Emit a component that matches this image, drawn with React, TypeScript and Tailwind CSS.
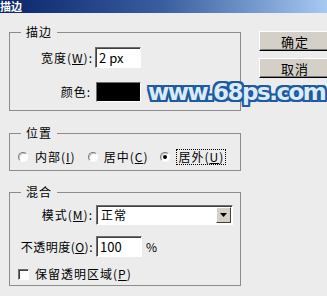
import React from "react";

const font = { fontFamily: '"Noto Sans CJK SC", "Liberation Sans", sans-serif' };

function Group({ title, children, className = "" }: { title: string; children: React.ReactNode; className?: string }) {
  return (
    <fieldset className={`w-[232px] border border-[#8c8c8c] px-0 ${className}`}>
      <legend className="ml-[11px] px-[5px] text-[12px] leading-[14px] tracking-[1px] text-black">{title}</legend>
      {children}
    </fieldset>
  );
}

function Radio({ checked = false }: { checked?: boolean }) {
  return (
    <span className="flex h-[10px] w-[10px] items-center justify-center rounded-full border border-t-[#7a7a7a] border-l-[#7a7a7a] border-b-white border-r-white bg-white shadow-[inset_1px_1px_0_#c8c8c8]">
      {checked && <span className="h-[4px] w-[4px] rounded-full bg-black" />}
    </span>
  );
}

function Field({ w, h = 21, children }: { w: number; h?: number; children?: React.ReactNode }) {
  return (
    <div
      className="flex items-center border border-t-[#6f6f6f] border-l-[#6f6f6f] border-b-white border-r-white bg-white pl-[3px] text-[13px] leading-none shadow-[inset_1px_1px_0_#404040]"
      style={{ width: w, height: h }}
    >
      {children}
    </div>
  );
}

function Button({ label }: { label: string }) {
  return (
    <div className="flex h-[20px] w-[72px] items-center justify-center border border-t-white border-l-white border-b-black border-r-black bg-[#d4d0c8] text-[13px] leading-none tracking-[1px] shadow-[inset_-1px_-1px_0_#808080]">
      {label}
    </div>
  );
}

export default function App() {
  return (
    <div className="relative h-[296px] w-[327px] overflow-hidden bg-[#ececec] text-black" style={font}>
      <div className="flex h-[13px] items-center overflow-hidden bg-gradient-to-r from-[#0a246a] via-[#3a5fa0] to-[#a6caf0]">
        <span className="text-[11px] font-bold leading-[13px] text-white">描边</span>
      </div>

      <div className="flex">
        <div className="ml-[9px] flex flex-col">
          <Group title="描边" className="mt-[12px] pt-[8px] pb-[8px]">
            <div className="flex items-center">
              <span className="w-[83px] text-right text-[12px] tracking-[1px]">宽度(<u>W</u>):</span>
              <div className="ml-[2px]">
                <Field w={46}>2 px</Field>
              </div>
            </div>
            <div className="mt-[14px] flex items-center">
              <span className="w-[81px] text-right text-[12px] tracking-[1px]">颜色:</span>
              <div className="ml-[5px] h-[20px] w-[45px] border border-t-[#6f6f6f] border-l-[#6f6f6f] border-b-white border-r-white bg-black" />
            </div>
          </Group>

          <Group title="位置" className="mt-[15px] pt-[9px] pb-[5px]">
            <div className="flex items-center text-[12px] leading-[14px] tracking-[1px]">
              <span className="ml-[8px]"><Radio /></span>
              <span className="ml-[7px]">内部(<u>I</u>)</span>
              <span className="ml-[12px]"><Radio /></span>
              <span className="ml-[6px]">居中(<u>C</u>)</span>
              <span className="ml-[12px]"><Radio checked /></span>
              <span className="ml-[6px] border border-dotted border-black px-[1px]">居外(<u>U</u>)</span>
            </div>
          </Group>

          <Group title="混合" className="mt-[14px] pt-[6px] pb-[4px]">
            <div className="flex items-center">
              <span className="w-[83px] text-right text-[12px] tracking-[1px]">模式(<u>M</u>):</span>
              <div className="ml-[3px] flex h-[20px] w-[137px] items-center border border-t-[#6f6f6f] border-l-[#6f6f6f] border-b-white border-r-white bg-white shadow-[inset_1px_1px_0_#404040]">
                <span className="flex-1 pl-[4px] text-[12px] tracking-[1px]">正常</span>
                <span className="mr-[1px] flex h-[16px] w-[15px] items-center justify-center border border-t-white border-l-white border-b-[#404040] border-r-[#404040] bg-[#d4d0c8]">
                  <svg width="7" height="4" viewBox="0 0 7 4"><path d="M0 0h7L3.5 4z" fill="black" /></svg>
                </span>
              </div>
            </div>
            <div className="mt-[11px] flex items-center">
              <span className="ml-[6px] w-[77px] whitespace-nowrap text-right text-[12px] tracking-[0.5px]">不透明度(<u>O</u>):</span>
              <div className="ml-[3px]">
                <Field w={46} h={21}>100</Field>
              </div>
              <span className="ml-[4px] text-[12px]">%</span>
            </div>
            <div className="mt-[10px] flex items-center text-[12px] leading-[14px] tracking-[1px]">
              <span className="ml-[8px] h-[11px] w-[11px] border border-t-[#6f6f6f] border-l-[#6f6f6f] border-b-white border-r-white bg-white shadow-[inset_1px_1px_0_#404040]" />
              <span className="ml-[6px]">保留透明区域(<u>P</u>)</span>
            </div>
          </Group>
        </div>

        <div className="ml-[18px] mt-[18px] flex flex-col gap-[7px]">
          <Button label="确定" />
          <Button label="取消" />
        </div>
      </div>

      <div
        className="absolute left-[148px] top-[75px] text-[23px] font-bold tracking-[-1.5px] text-[#dcebf9]"
        style={{
          fontFamily: '"DejaVu Sans", sans-serif',
          textShadow:
            "2px 0 0 #1f5aa0, -2px 0 0 #1f5aa0, 0 2px 0 #1f5aa0, 0 -2px 0 #1f5aa0, 1px 1px 0 #1f5aa0, -1px -1px 0 #1f5aa0, 1px -1px 0 #1f5aa0, -1px 1px 0 #1f5aa0, 2px 2px 0 #1f5aa0, -2px -2px 0 #1f5aa0, 2px -2px 0 #1f5aa0, -2px 2px 0 #1f5aa0",
        }}
      >
        www.68ps.com
      </div>
    </div>
  );
}
